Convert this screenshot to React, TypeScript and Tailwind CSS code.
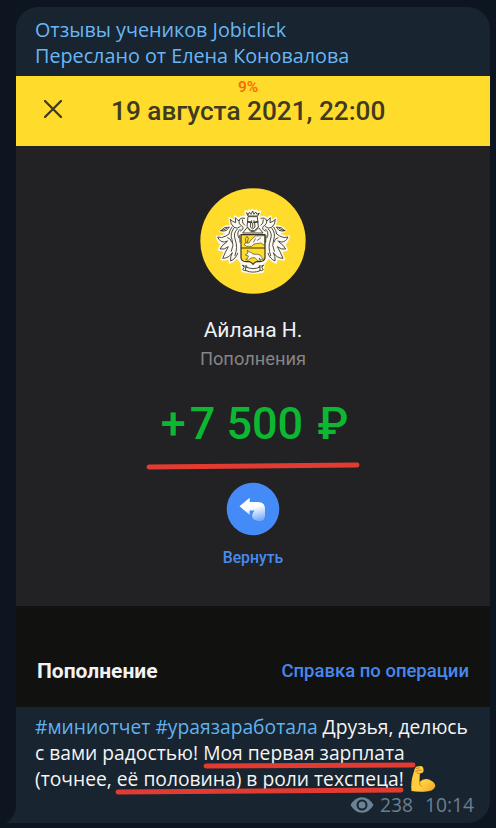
import type { ReactNode } from "react";

const INK = "#35301d";

/** Left half of the crest's mantling; the right half is the same drawing mirrored. */
function Mantling() {
  return (
    <g strokeLinejoin="round" strokeLinecap="round">
      <path
        d="M189 122 L170 118 L163 109 Q153 107 145 114 L135 107 L134 121 Q126 117 119 112 Q118 124 123 135 Q101 134 91 151 Q105 157 113 151 L105 163 Q90 171 80 167 Q84 184 94 190 L86 207 Q95 211 104 208 Q99 226 94 236 Q106 238 117 232 L119 246 Q132 242 141 229 L153 246 L189 246 Z"
        fill="#fbfaf4"
        stroke="#fbfaf4"
        strokeWidth="6"
      />
      <g fill="none" stroke={INK} strokeWidth="2.6">
        <path d="M164 113 Q151 109 146 121 L136 111 L137 126 Q127 123 121 116 Q121 131 132 140 Q143 146 151 138" />
        <path d="M92 150 Q103 137 118 139 L110 149 Q101 153 92 150 M96 150 L110 143" />
        <path d="M126 139 Q118 150 117 160 L108 166 Q94 174 83 169 Q89 184 103 184 L113 181" />
        <path d="M110 184 Q96 193 90 205 Q103 208 115 198 Q107 212 98 233 Q116 233 127 216 Q120 228 122 241 Q137 235 143 218" />
        <path d="M131 143 Q119 160 126 177 Q133 193 124 212" />
        <path d="M142 145 Q128 158 136 178 Q144 199 135 225" />
        <path d="M151 145 Q138 155 146 171 M149 164 L150 185 M113 171 Q123 173 125 184" />
        <path d="M148 118 Q143 129 157 137 Q164 146 151 151 M157 117 Q156 129 164 134" />
      </g>
    </g>
  );
}

function Crest() {
  return (
    <svg viewBox="30 22 318 318" className="size-[106px] shrink-0" aria-hidden="true">
      <circle cx="189" cy="181" r="158" fill="#ffdc2b" />
      <path
        d="M166 92 L173 94 L177 89 L182 93 L187 87 L193 93 L199 89 L203 95 L211 92 L206 108 L210 137 L225 160 L227 240 L210 252 L221 253 L219 273 L190 277 L157 272 L154 253 L168 252 L151 239 L151 159 L169 139 Z"
        fill="#fbfaf4"
        stroke="#fbfaf4"
        strokeWidth="6"
        strokeLinejoin="round"
      />
      <Mantling />
      <g transform="translate(377 0) scale(-1 1)">
        <Mantling />
      </g>
      <g fill="none" stroke={INK} strokeWidth="2.6" strokeLinejoin="round" strokeLinecap="round">
        {/* crown and helmet */}
        <path fill="#fbfaf4" d="M170 97 L174 106 H203 L208 97 L201 101 L197 94 L192 101 L188 91 L183 101 L178 95 L175 101 Z" />
        <path fill="#fbfaf4" d="M175 108 H202 L205 139 L193 150 H183 L172 139 Z" />
        <path d="M174 124 L185 126 V120 M203 124 L192 126 V120 M182 128 L181 139 L188 145 L195 139 L194 128 M188 128 V140" />
        <path strokeWidth="4" d="M174 123 L185 125 M203 123 L192 125" />
        <path fill="#fbfaf4" d="M171 141 L158 157 H219 L206 141 L194 153 H184 Z" />
        {/* shield */}
        <path
          d="M153 162 H225 V232 Q223 242 210 243 H199 Q192 246 189 251 Q186 246 179 243 H168 Q155 242 153 232 Z"
          fill="#ffdc2b"
          strokeWidth="3.5"
        />
        <path d="M154 202 H224" strokeWidth="3" />
        <path
          fill="#fbfaf4"
          strokeWidth="1.8"
          d="M223 165 L197 166 Q186 173 181 181 L177 187 H166 L163 192 L170 197 H185 L192 190 L213 187 L223 194 Z"
        />
        <path strokeWidth="2" d="M168 186 L166 174 L171 167 L175 173 L172 185 M196 174 L191 184 M212 172 L202 179" />
        <path
          fill="#fbfaf4"
          strokeWidth="1.8"
          d="M167 222 L174 217 L172 209 L179 214 Q184 213 188 220 L203 221 Q212 221 215 230 L221 236 L212 236 L207 232 L212 242 L203 240 L195 231 L182 232 L175 239 L167 236 L172 234 L175 227 Z"
        />
        {/* ribbon */}
        <path fill="#fbfaf4" d="M158 254 Q164 259 170 255 L171 269 Q164 272 158 267 L162 261 Z M220 254 Q214 259 208 255 L207 269 Q214 272 220 267 L216 261 Z" />
        <path fill="#fbfaf4" d="M168 259 Q189 269 210 259 V270 Q189 279 168 270 Z" />
      </g>
    </svg>
  );
}

function ReturnIcon() {
  return (
    <svg viewBox="0 0 54 54" className="size-[54px]" aria-hidden="true">
      <defs>
        <linearGradient id="tail" x1="0.3" y1="0" x2="0.6" y2="1">
          <stop offset="0.45" stopColor="#fff" />
          <stop offset="1" stopColor="#fff" stopOpacity="0.3" />
        </linearGradient>
      </defs>
      <circle cx="27" cy="27" r="26.3" fill="#448bf8" />
      <path
        d="M13.5 24.2 L23.7 15.7 V20 H32 Q39 20 39 27 V34 Q39 39 33 39 Q27 39 26 34 Q27 30 28.5 28.5 H23.7 V33 Z"
        fill="url(#tail)"
      />
    </svg>
  );
}

function Biceps() {
  return (
    <svg viewBox="0 0 26 28" className="h-7 w-[26px]" aria-hidden="true">
      <defs>
        <linearGradient id="skin" x1="0" y1="0" x2="1" y2="1">
          <stop offset="0" stopColor="#ffc83d" />
          <stop offset="0.6" stopColor="#ffce3f" />
          <stop offset="1" stopColor="#efa326" />
        </linearGradient>
      </defs>
      <path
        d="M5 3 Q6 1.2 8.5 1.3 L11 1 Q13.5 1.5 13.5 4 V6.5 Q12.5 8.5 9.8 8.6 L9.5 17 Q13.5 13 19 14.5 Q25.5 17 25.3 21.5 Q23 26.7 14 26.7 Q6 27 1.5 26 Q.5 17 3.5 8 Z"
        fill="url(#skin)"
      />
      <path d="M5.5 6.5 Q8 4.5 11 5.2 M6 3.5 L9 2.9 M9.5 17 Q9 20 11.5 21.5 M10 8.5 Q8 8.5 7 7.7" fill="none" stroke="#c98118" strokeWidth="1" strokeLinecap="round" />
    </svg>
  );
}

function ViewsIcon() {
  return (
    <svg viewBox="0 0 24 16" className="h-4 w-6" aria-hidden="true">
      <path d="M.5 8 Q5 .3 12 .3 T23.5 8 Q19 15.7 12 15.7 T.5 8 Z" fill="#6b8394" />
      <circle cx="12" cy="8" r="4.5" fill="none" stroke="#182430" strokeWidth="2" />
    </svg>
  );
}

function Tag({ children }: { children: ReactNode }) {
  return <span className="text-[#62b2ec]">{children}</span>;
}

// Red marker strokes drawn over the message
function MarkerStrokes() {
  return (
    <svg viewBox="0 0 496 828" className="pointer-events-none absolute inset-0 h-[828px] w-[496px]" aria-hidden="true">
      <g stroke="#e23b31" strokeWidth="5" strokeLinecap="round" fill="none">
        <path d="M149 467 L357 465" />
        <path d="M206 766 L413 765" />
        <path d="M118 792 L401 790" />
      </g>
    </svg>
  );
}

export default function App() {
  return (
    <div className="relative flex h-[828px] w-[496px] flex-col overflow-hidden bg-[#0d1520] pt-[7px] pr-1.5 pb-[5px] pl-4">
      <article className="relative flex h-[816px] w-[474px] flex-col rounded-t-[22px] rounded-br-[22px] bg-[#182430]">
        <svg viewBox="0 0 9 17" className="absolute bottom-0 -left-[9px] h-[17px] w-[9px]" aria-hidden="true">
          <path d="M9 0 Q8 12 0 16 V17 H9 Z" fill="#182430" />
        </svg>

        <header className="h-[69px] shrink-0 pt-2.5 pl-[19px] font-['Open_Sans',sans-serif] text-[19.75px] leading-[26px] font-medium whitespace-nowrap text-[#69b7f5]">
          <p>Отзывы учеников Jobiclick</p>
          <p>Переслано от Елена Коновалова</p>
        </header>

        <section className="flex h-[631px] shrink-0 flex-col font-[Roboto,sans-serif]">
          <div className="relative flex h-[70px] shrink-0 items-center bg-[#ffdc2b] text-[#403a20]">
            <svg viewBox="0 0 18 18" className="mb-1 ml-7 size-[18px]" aria-hidden="true">
              <path d="M1 1 L17 17 M17 1 L1 17" stroke="currentColor" strokeWidth="2.3" strokeLinecap="round" />
            </svg>
            <h1 className="ml-[49px] text-[26.2px] leading-10 font-medium whitespace-nowrap">19 августа 2021, 22:00</h1>
            <span className="absolute top-0 left-[222px] text-[15.5px] leading-[22px] font-semibold text-[#fb6a08]">9%</span>
          </div>

          <div className="flex h-[460px] shrink-0 flex-col items-center bg-[#222224] pt-[42px] whitespace-nowrap">
            <Crest />
            <h2 className="mt-[22px] text-[21px] leading-7 text-[#f1f1f1]">Айлана Н.</h2>
            <p className="mt-px text-[18.3px] leading-7 text-[#858585]">Пополнения</p>
            <p className="mt-[23px] ml-[3px] text-[45px] leading-[56px] font-medium text-[#0cb832]">
              <span className="mr-1">+</span>7 500 <span className="ml-[3px]">₽</span>
            </p>
            <button className="mt-[30px] flex flex-col items-center text-[15.8px] leading-6 font-medium text-[#488bf3]">
              <ReturnIcon />
              <span className="mt-2.5">Вернуть</span>
            </button>
          </div>

          <div className="flex h-[101px] shrink-0 items-start justify-between bg-[#111110] pt-[51px] pr-[21px] pl-[21px] leading-7 whitespace-nowrap">
            <h3 className="text-[21px] leading-7 font-bold text-[#f2f2f2]">Пополнение</h3>
            <a className="text-[18.5px] leading-7 font-medium text-[#4788ef]">Справка по операции</a>
          </div>
        </section>

        <div className="h-[79px] shrink-0 pt-[7px] pl-[19px] font-['Open_Sans',sans-serif] text-[19.25px] leading-[26px] whitespace-nowrap text-[#f5f5f5]">
          <p>
            <Tag>#миниотчет</Tag> <Tag>#ураязаработала</Tag> Друзья, делюсь
          </p>
          <p>с вами радостью! Моя первая зарплата</p>
          <p className="flex items-center">
            (точнее, её половина) в роли техспеца!
            <span className="-my-2 ml-1.5">
              <Biceps />
            </span>
          </p>
        </div>

        <footer className="mt-1 flex items-center justify-end pr-4 font-['Open_Sans',sans-serif] text-[19.25px] leading-[30px] text-[#6b7f8e]">
          <ViewsIcon />
          <span className="ml-1.5">238</span>
          <span className="ml-3">10:14</span>
        </footer>
      </article>
      <MarkerStrokes />
    </div>
  );
}
